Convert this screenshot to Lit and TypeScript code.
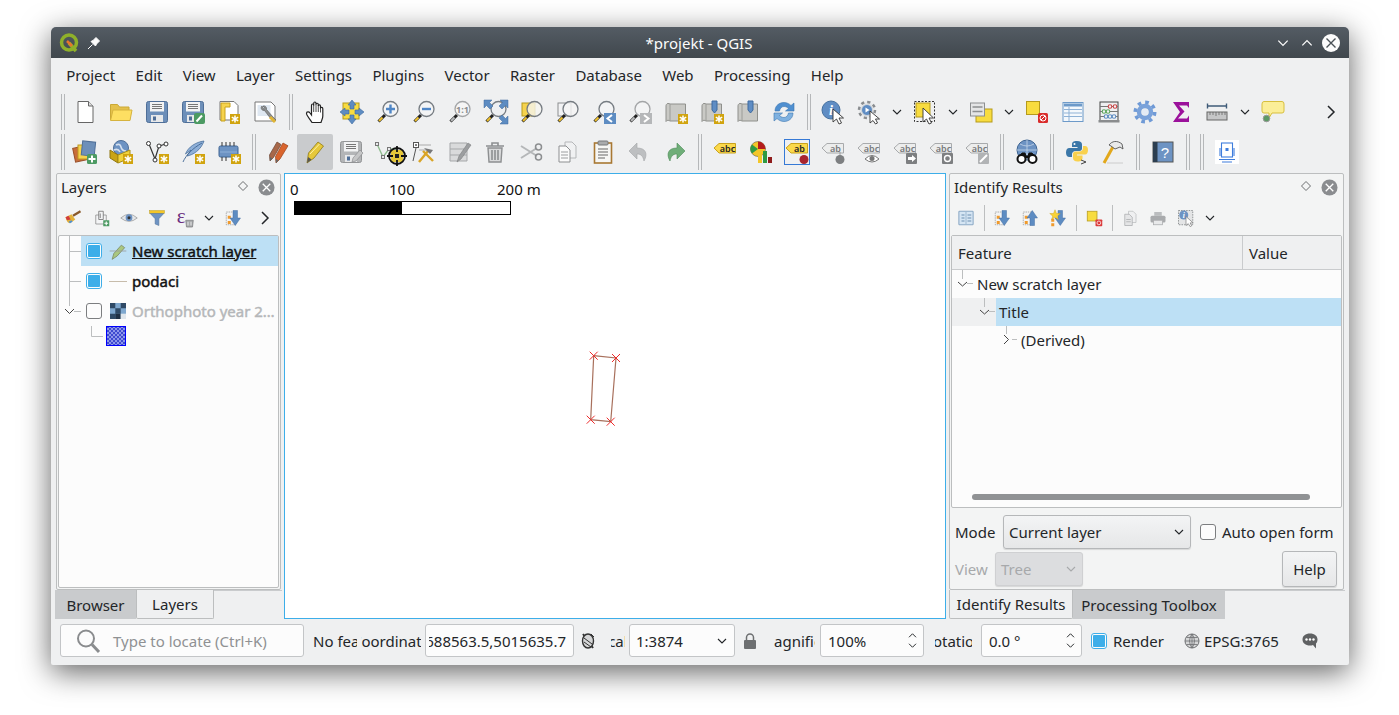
import { LitElement, css, html, svg } from 'lit'
import { customElement } from 'lit/decorators.js'

// shared little pieces for the icons
const star = (x = 14, y = 14) => svg`
  <rect x=${x} y=${y} width="10" height="10" fill="#d1a40f"/>
  <path d="M${x + 5} ${y + 1.5}v7M${x + 1.8} ${y + 3.2}l6.4 3.6M${x + 8.2} ${y + 3.2}l-6.4 3.6" stroke="#fff" stroke-width="1.5"/>`

const mag = (inner: unknown = null, fill = '#f3f4f5', handle = '#efc02c', ring = '#767c82') => svg`
  <line x1="9" y1="15" x2="2.5" y2="21.5" stroke="#222" stroke-width="3"/>
  <line x1="6.5" y1="17.5" x2="3" y2="21" stroke=${handle} stroke-width="2"/>
  <circle cx="14.5" cy="9" r="7.5" fill=${fill} stroke=${ring} stroke-width="1.3"/>
  ${inner}`

const floppy = (c = '#6d8fb9', e = '#4f6f98') => svg`
  <path d="M1.5 3.5a2 2 0 0 1 2-2h17a2 2 0 0 1 2 2v17a2 2 0 0 1-2 2h-17a2 2 0 0 1-2-2z" fill=${c} stroke=${e}/>
  <rect x="5" y="2" width="14" height="9.5" fill="#f2f3f4"/>
  <path d="M7 4.5h10M7 6.5h10M7 8.5h10" stroke="#777" stroke-width="1"/>
  <rect x="6" y="15" width="12" height="7" fill="#e8e9ea"/>
  <rect x="8" y="16.5" width="3" height="4" fill="#4f6f98"/>`

const scroll = (c = '#c9c9c5') => svg`
  <path d="M4 3.5C2.5 3.5 2 5 2 6V21.5C3 20 4.5 20 6 21H21.5V4H6C5.5 3.5 5 3.5 4 3.5Z" fill=${c} stroke="#8f908c"/>
  <path d="M6 4V21" stroke="#9b9c98"/>`

const bookmark = svg`<path d="M12 1H17V10L14.5 13L12 10Z" fill="#5f8dc4" stroke="#3e6a9f"/>`

const tag = (t: string, fill = '#fbd94b', edge = '#c9a21d', ink = '#222') => svg`
  <path d="M1 8L6 3.5H22.5V13H6Z" fill=${fill} stroke=${edge}/>
  <text x="14.5" y="11.5" text-anchor="middle" font-family="Noto Sans, sans-serif" font-size="9" font-weight="600" fill=${ink}>${t}</text>`

const greyTag = (t: string) => tag(t, '#eceded', '#a8aaac', '#77797b')

const icons: Record<string, unknown> = {
  new: svg`<path d="M5 1.5H15.5L20 6V22.5H5Z" fill="#fff" stroke="#666"/><path d="M15.5 1.5V6H20" fill="#ddd" stroke="#666"/>`,
  open: svg`<path d="M1.5 20V4.5H8.5L10.5 7H20V11H5Z" fill="#e4c14c" stroke="#cba935"/><path d="M1.5 20.5L4 10H23L21 20.5Z" fill="#fddf62" stroke="#d6b33e"/>`,
  save: floppy(),
  saveas: svg`${floppy()}<rect x="13" y="13" width="11" height="11" rx="2" fill="#4c9a63"/><path d="M15.5 21.5L21 15.5" stroke="#fff" stroke-width="2"/>`,
  layout: svg`<path d="M3 1.5H17L21 5.5V20H3Z" fill="#fff" stroke="#777"/><path d="M4 3H13V7H8V21H4Z" fill="#f6d34d" stroke="#c9a21d"/>${star(13, 14)}`,
  props: svg`<path d="M2 2H18L22 6V21H2Z" fill="#fff" stroke="#777"/><rect x="4.5" y="5" width="13" height="11" fill="#dfe8f2"/><path d="M9 6C7 8 9 11 11.5 10.5L18 19L21 22L23 20L20 17L13.5 9.5C14 7 12 5.5 10 6L12 8L11 9.5Z" fill="#8d8f90" stroke="#555" stroke-width=".6"/><path d="M17 17L22 22" stroke="#e0b534" stroke-width="3"/>`,
  hand: svg`<path d="M8 22.5C6 19 2.5 15.5 2.5 13.5C2.5 11.5 5 11.5 6 13L7.5 15V5.5C7.5 3.5 9.7 3.5 9.7 5.5V3.5C9.7 1.5 12 1.5 12 3.5V4.5C12 2.8 14.3 2.8 14.3 4.5V6C14.3 4.5 16.5 4.5 16.5 6.2V8.5C16.5 7 18.8 7 18.8 8.8V16C18.8 19 17.3 20.5 17 22.5Z" fill="#fff" stroke="#222" stroke-width="1.2"/><path d="M9.7 5V12M12 4V12M14.3 5.5V12M16.5 8V12.5" stroke="#222" stroke-width=".8"/>`,
  pansel: svg`<rect x="3" y="3" width="16" height="16" fill="#f8dc3f" stroke="#b59a1d"/><path d="M12 0L16 5H14V9H10V5H8ZM12 24L16 19H14V15H10V19H8ZM0 12L5 8V10H9V14H5V16ZM24 12L19 8V10H15V14H19V16Z" fill="#5d8cc2" stroke="#3e6a9f" stroke-width=".6"/>`,
  zin: mag(svg`<path d="M10 9H19M14.5 4.5V13.5" stroke="#4f86c6" stroke-width="2.4"/>`),
  zout: mag(svg`<path d="M10 9H19" stroke="#4f86c6" stroke-width="2.4"/>`),
  z11: mag(svg`<text x="14.5" y="12.5" text-anchor="middle" font-family="Noto Sans, sans-serif" font-size="9" font-weight="700" fill="#8b8d8f">1:1</text>`, '#f5f5f5', '#b9bbbd', '#a3a5a7'),
  zfull: svg`${mag(null, '#eef0f2')}<path d="M0 0H8L5.5 2.5L9 6L6 9L2.5 5.5L0 8ZM24 0H16L18.5 2.5L15 6L18 9L21.5 5.5L24 8ZM24 24H16L18.5 21.5L15 18L18 15L21.5 18.5L24 16Z" fill="#5d8cc2" stroke="#3e6a9f" stroke-width=".5"/>`,
  zsel: svg`<rect x="2" y="3" width="13" height="13" fill="#f6d34d" stroke="#b59a1d"/>${mag(null, 'rgba(245,245,240,.8)')}`,
  zlayer: svg`<rect x="2" y="3" width="13" height="13" fill="#f2f3f4" stroke="#8c8e90"/>${mag(null, 'rgba(245,245,245,.8)')}`,
  zlast: svg`${mag()}<rect x="12" y="13" width="12" height="11" fill="#5d8cc2"/><path d="M20 15L15.5 18.5L20 22" fill="none" stroke="#fff" stroke-width="2"/>`,
  znext: svg`${mag(null, '#f3f4f5', '#bbbcbd', '#a3a5a7')}<rect x="12" y="13" width="12" height="11" fill="#b5b7b9"/><path d="M16 15L20.5 18.5L16 22" fill="none" stroke="#fff" stroke-width="2"/>`,
  map: svg`${scroll()}${star()}`,
  mapmark: svg`${scroll()}${bookmark}${star()}`,
  mark: svg`${scroll()}${bookmark}`,
  refresh: svg`<path d="M3 11C3 5 8 2.5 12 2.5C15 2.5 17.5 4 19 5.5L22 3V11H13.5L16.5 8.5C15 7 13.5 6.5 12 6.5C9.5 6.5 8 8.5 7.5 11Z" fill="#4f8fd0" stroke="#3b75b0" stroke-width=".6"/><path d="M21 13C21 19 16 21.5 12 21.5C9 21.5 6.5 20 5 18.5L2 21V13H10.5L7.5 15.5C9 17 10.5 17.5 12 17.5C14.5 17.5 16 15.5 16.5 13Z" fill="#7fb1e0" stroke="#3b75b0" stroke-width=".6"/>`,
  identify: svg`<circle cx="10" cy="10" r="9" fill="#5f8dc4" stroke="#44709f"/><text x="10" y="15" text-anchor="middle" font-family="Liberation Serif, serif" font-style="italic" font-weight="700" font-size="14" fill="#fff">i</text><path d="M12 9L12 22L15.5 19L18 24L20.5 23L18 18L22.5 18Z" fill="#fff" stroke="#333" stroke-width=".9"/>`,
  action: svg`<circle cx="10" cy="10" r="8" fill="#e6e8ea" stroke="#8a8d90" stroke-width="2.5" stroke-dasharray="3.2 3.08"/><circle cx="10" cy="10" r="5.5" fill="#5f8dc4" stroke="#d5d7d9"/><path d="M8.5 7.5L12.5 10L8.5 12.5Z" fill="#fff"/><path d="M13 11L13 23L16 20.5L18.5 24L20.5 23L18.5 19L22.5 19Z" fill="#fff" stroke="#333" stroke-width=".9"/>`,
  select: svg`<rect x="1.5" y="1.5" width="20" height="20" fill="none" stroke="#333" stroke-dasharray="2 1.5"/><rect x="3" y="3" width="14" height="14" fill="#f8dc3f" stroke="#b59a1d"/><path d="M10 8L10 22L13.5 19L16 24L18.5 23L16 18L20.5 18Z" fill="#fff" stroke="#333" stroke-width=".9"/>`,
  attr: svg`<rect x="7" y="9" width="16" height="13" fill="#f8dc3f" stroke="#b59a1d"/><rect x="1.5" y="3" width="14" height="13" fill="#e4e5e6" stroke="#8c8e90"/><path d="M3.5 7H13.5M3.5 11.5H13.5" stroke="#8c8e90" stroke-width="1.4"/>`,
  desel: svg`<rect x="1.5" y="1.5" width="13" height="13" fill="#f8dc3f" stroke="#b59a1d"/><rect x="13" y="13" width="10" height="10" rx="1.5" fill="#d92b2b"/><circle cx="18" cy="18" r="3" fill="none" stroke="#fff"/><path d="M16 20L20 16" stroke="#fff"/>`,
  table: svg`<rect x="2" y="2.5" width="20" height="19" fill="#f4f8fc" stroke="#6d9ac9"/><rect x="3" y="3.5" width="18" height="3" fill="#6d9ac9"/><path d="M3 9.5H21M3 13H21M3 16.5H21M8 7V21" stroke="#8fb2d6"/>`,
  abacus: svg`<rect x="3" y="2" width="18" height="19" fill="none" stroke="#444"/><rect x="1.5" y="20" width="21" height="2.5" fill="#8a8c8e"/><path d="M3 6.5H21M3 11.5H21M3 16.5H21" stroke="#777"/><g fill="#f3f4f5" stroke-width="1.1"><circle cx="13" cy="6.5" r="1.8" stroke="#cb4545"/><circle cx="18" cy="6.5" r="1.8" stroke="#cb4545"/><circle cx="7" cy="11.5" r="1.8" stroke="#5da75d"/><circle cx="11" cy="11.5" r="1.8" stroke="#5da75d"/><circle cx="9" cy="16.5" r="1.8" stroke="#5d8cc2"/><circle cx="13" cy="16.5" r="1.8" stroke="#5d8cc2"/><circle cx="17" cy="16.5" r="1.8" stroke="#5d8cc2"/></g>`,
  gear: svg`<circle cx="12" cy="12" r="9.7" fill="none" stroke="#6f9ad6" stroke-width="3.6" stroke-dasharray="3.6 4"/><circle cx="12" cy="12" r="6" fill="none" stroke="#7aa2da" stroke-width="4.4"/><circle cx="12" cy="12" r="3" fill="#e4ebf5"/>`,
  sigma: svg`<path d="M4 2H20V8L18 5.5H10L15.5 11.5L9 18.5H18L20 15.5V22H4L11 12Z" fill="#9b119b"/>`,
  ruler: svg`<rect x="2" y="12" width="20" height="8" fill="#c5c6c7" stroke="#666"/><path d="M5 12v3M8 12v3M11 12v4M14 12v3M17 12v3M20 12v3" stroke="#666" stroke-width=".8"/><path d="M2 6H22M2.5 3.5V8.5M21.5 3.5V8.5" stroke="#3f5b78" stroke-width="1.4"/>`,
  bubble: svg`<path d="M3 1.5H21Q23 1.5 23 4V11Q23 13 21 13H11L8 18V13H3Q1 13 1 11V4Q1 1.5 3 1.5Z" fill="#fbee98" stroke="#d7bf3e"/><circle cx="5.5" cy="18.5" r="3.3" fill="#5c9a64" stroke="#999"/>`,
  addlayer: svg`<rect x="1" y="7" width="13" height="14" fill="#c86d3a" stroke="#99502a" transform="rotate(-12 7 14)"/><rect x="5" y="5" width="13" height="14" fill="#f6d34d" stroke="#bd9a22"/><rect x="9" y="1.5" width="13" height="14" fill="#6d8fb9" stroke="#4f6f98" transform="rotate(6 15 8)"/><rect x="14" y="14" width="10" height="10" rx="1.5" fill="#4c9a63"/><path d="M19 15.5V22.5M15.5 19H22.5" stroke="#fff" stroke-width="2"/>`,
  gpkg: svg`<circle cx="12" cy="8" r="7.5" fill="#6d93c3" stroke="#4f6f98"/><path d="M7 5Q11 3 12 7T17 11M5 10Q9 8 11 12" fill="none" stroke="#d5e0ee" stroke-width="1.6"/><path d="M1 10L9 15V23L1 18Z" fill="#c9a415" stroke="#8f7610"/><path d="M9 15L21 10V18L9 23Z" fill="#f1d23c" stroke="#a88d18"/>${star()}`,
  vstar: svg`<path d="M4 4L10 19L14 6L21 4" fill="none" stroke="#333" stroke-width="1.2"/><g fill="#fff" stroke="#333"><circle cx="3.5" cy="3.5" r="2"/><circle cx="10" cy="20" r="2"/><circle cx="14" cy="6" r="2"/><circle cx="21" cy="4" r="2"/></g>${star()}`,
  feather: svg`<path d="M23 1C15 2 7 7 4.5 14C6 13 8 11 10 10C8 12.500 6 15 6 16C12 15 20 10 23 1Z" fill="#8fb0d8" stroke="#3f6593" stroke-width=".7"/><path d="M2 22C5 15 12 8 21 3" fill="none" stroke="#3f6593" stroke-width=".9"/>${star()}`,
  chip: svg`<rect x="2" y="6" width="19" height="11" rx="1.500" fill="#6d93c3" stroke="#3f6593"/><path d="M5 2V6M9 2V6M13 2V6M17 2V6M5 17V21M9 17V21" stroke="#333"/><path d="M3 12H20" stroke="#8fb0d8"/>${star()}`,
  pencils: svg`<path d="M3 21L2.500 15L10 2L14 4.500L6.500 17.500Z" fill="#a8684a" stroke="#6b4430" stroke-width=".7"/><path d="M9 23L8.500 16.500L16 3L21 5.800L13 19Z" fill="#d9642d" stroke="#984119" stroke-width=".7"/><path d="M3 21L2.700 17L5.500 18.500ZM9 23L8.700 19L11.500 20.500Z" fill="#666"/>`,
  pencil: svg`<path d="M4 23L5.5 13L15 2L20.5 6L11 18Z" fill="#e6c83a" stroke="#8f7b17" stroke-width=".8"/><path d="M4 23L5.2 17L8.5 19.5Z" fill="#555"/><path d="M7 14L16.5 4" stroke="#fff3a8"/>`,
  saveedit: svg`${floppy('#b3b5b7', '#939597')}<path d="M13 22L14 18L21 10L24 13L17 21Z" fill="#c5c6c7" stroke="#8c8e90" stroke-width=".7"/>`,
  vertex: svg`<path d="M2 4L8 17L14 9L21 9" fill="none" stroke="#8ebc8e" stroke-width="1.4"/><g fill="#e9eaeb" stroke="#777"><rect x=".5" y="2.5" width="3" height="3"/><rect x="6.5" y="15.5" width="3" height="3"/><rect x="12.5" y="7.5" width="3" height="3"/></g><rect x="16" y="10" width="12" height="12" fill="#e6c83a"/><circle cx="22" cy="16" r="8" fill="none" stroke="#111" stroke-width="1.8"/><path d="M22 6V12M22 20V26M12 16H18M26 16H32" stroke="#111" stroke-width="1.8"/><rect x="20" y="14" width="4" height="4" fill="#222"/>`,
  digi: svg`<path d="M5 8L2 21" stroke="#555"/><rect x="2.5" y="2.5" width="5" height="5" fill="#fff" stroke="#555"/><circle cx="5" cy="5" r="1" fill="#555"/><path d="M8 5H20M8 10H18" stroke="#aaa"/><path d="M8 22L17 11" stroke="#d9a427" stroke-width="2.4"/><path d="M12 11L22 21" stroke="#d9a427" stroke-width="2.4"/><path d="M13 8L19 14L22 10Z" fill="#777"/>`,
  editlist: svg`<path d="M3 3H20V21H3ZM3 9H20M3 15H20" fill="#d9dadb" stroke="#a5a7a9"/><path d="M10 22L12 16L21 3L24 5L14 19Z" fill="#9c9ea0" stroke="#7d7f81" stroke-width=".6"/>`,
  trash: svg`<path d="M3 6H21M9 6V3H15V6" fill="none" stroke="#8d8f91" stroke-width="1.6"/><path d="M5 8H19L18 22H6Z" fill="#d9dadb" stroke="#8d8f91" stroke-width="1.4"/><path d="M9 10V20M12 10V20M15 10V20" stroke="#8d8f91" stroke-width="1.6"/>`,
  scissors: svg`<path d="M2 6L18 16M2 18L18 8" stroke="#b5b7b9" stroke-width="2"/><circle cx="19.5" cy="7" r="3" fill="none" stroke="#8d8f91" stroke-width="1.5"/><circle cx="19.5" cy="17" r="3" fill="none" stroke="#8d8f91" stroke-width="1.5"/>`,
  copy: svg`<path d="M10 2H17L21 6V18H10Z" fill="#f0f1f2" stroke="#b5b7b9"/><path d="M4 6H11L15 10V22H4Z" fill="#fbfbfb" stroke="#8d8f91"/><path d="M6 12H13M6 15H13M6 18H13" stroke="#9b9d9f"/>`,
  paste: svg`<rect x="3.5" y="3" width="17" height="20" fill="#f6f6f4" stroke="#a87833" stroke-width="1.6"/><rect x="7" y="1" width="10" height="4" rx="1" fill="#a9abad" stroke="#77797b"/><path d="M7 9H17M7 12H17M7 15H17M7 18H14" stroke="#666"/>`,
  undo: svg`<path d="M10 3L2 11L10 19V14C14 14 16 16 17 21C21 14 19 8 10 8Z" fill="#bdbfc1" stroke="#a2a4a6" stroke-width=".6"/>`,
  redo: svg`<path d="M14 3L22 11L14 19V14C10 14 8 16 7 21C3 14 5 8 14 8Z" fill="#6fae78" stroke="#4e8a58" stroke-width=".6"/>`,
  labelabc: tag('abc'),
  pie: svg`<circle cx="9" cy="9" r="7.5" fill="#f3c628" stroke="#444" stroke-width=".5"/><path d="M9 9V1.5A7.5 7.5 0 0 1 16.5 9Z" fill="#b41c1c"/><path d="M9 9L3 13.5A7.5 7.5 0 0 1 3 4.5Z" fill="#2f9a44"/><rect x="9" y="15" width="4" height="8" fill="#f3c628"/><rect x="14" y="11" width="4" height="12" fill="#2f9a44"/><rect x="19" y="17" width="4" height="6" fill="#8f1c1c"/>`,
  abpin: svg`${tag('ab')}<circle cx="19" cy="19.500" r="4.5" fill="#a8252f"/>`,
  abgrey: svg`${greyTag('ab')}<path d="M19 12V16" stroke="#9c9ea0"/><circle cx="19" cy="19.500" r="4.5" fill="#7d7f81"/>`,
  abceye: svg`${greyTag('abc')}<path d="M8 19Q15 12 22 19Q15 25 8 19Z" fill="#fff" stroke="#777"/><circle cx="15" cy="18.5" r="2.5" fill="#777"/>`,
  abcmove: svg`${greyTag('abc')}<rect x="13" y="13" width="11" height="11" rx="1" fill="#7d7f81"/><path d="M15 17H19V15L23 18.5L19 22V20H15Z" fill="#fff"/>`,
  abcrot: svg`${greyTag('abc')}<rect x="13" y="13" width="11" height="11" rx="1" fill="#7d7f81"/><circle cx="18.5" cy="18.5" r="3" fill="none" stroke="#fff" stroke-width="1.4"/>`,
  abcedit: svg`${greyTag('abc')}<rect x="13" y="13" width="11" height="11" rx="1" fill="#b1b3b5"/><path d="M15 22L22 15" stroke="#fff" stroke-width="2"/>`,
  globebin: svg`<circle cx="12" cy="10" r="10" fill="#6d93c3" stroke="#3f6593"/><path d="M2 10H22M12 0V20M5 4Q12 8 19 4M5 16Q12 12 19 16" fill="none" stroke="#c5d5e8" stroke-width=".8"/><path d="M3 18L7 13H10L11 16H13L14 13H17L21 18" fill="#111" stroke="#111"/><circle cx="6.5" cy="19" r="4" fill="#fff" stroke="#111" stroke-width="2"/><circle cx="17.5" cy="19" r="4" fill="#fff" stroke="#111" stroke-width="2"/>`,
  python: svg`<path d="M12 1C8 1 7 2.5 7 4.5V7H12.5V8H4.5C2 8 1 10 1 12.5C1 15 2 17 4.5 17H7V14C7 12.5 8.5 11 10.5 11H14.5C16 11 17 10 17 8.5V4.5C17 2.5 15.5 1 12 1Z" fill="#3b77a8"/><circle cx="9.5" cy="4" r="1" fill="#fff"/><path d="M12.5 21.5C16.5 21.5 17.5 20 17.5 18V15.5H12V14.5H20C22 14.5 23 12.5 23 10C23 7.5 22 6 20 6H18V8.5C18 10 16.5 11.5 14.5 11.5H10.5C9 11.5 8 12.5 8 14V18C8 20 9.5 21.5 12.5 21.5Z" fill="#f9d14d"/><path d="M16 20L21 22L16 24" fill="none" stroke="#444"/>`,
  hammer: svg`<path d="M3 23L13 5" stroke="#e2a81c" stroke-width="3"/><path d="M8 5C11 1 16 0 21 4L22 9L19 7L14 9L10 6Z" fill="#e9eaeb" stroke="#555" stroke-width=".9"/><path d="M6 23H22" stroke="#ccc"/>`,
  help: svg`<rect x="2" y="2" width="20" height="20" fill="#6d93c3" stroke="#555"/><rect x="2" y="2" width="4.5" height="20" fill="#2c3e50"/><text x="14" y="18" text-anchor="middle" font-family="Liberation Sans, sans-serif" font-size="15" fill="#fff">?</text>`,
  plugin: svg`<rect width="24" height="24" fill="#fff"/><rect x="6.500" y="3" width="11" height="14" fill="none" stroke="#3f7ddc" stroke-width="1.100"/><path d="M5 8V16M19 8V16M4 19.500H20M7 22H17" stroke="#3f7ddc" stroke-width="1.100" fill="none"/><rect x="10.500" y="8" width="3" height="3" fill="#3f7ddc"/>`,
  brush: svg`<path d="M2 11L10 7L15 14L8 19C5 19 3 15 2 11Z" fill="#e3b23a"/><path d="M2 11L6 9L9 14L4 15Z" fill="#d23c3c"/><path d="M6 17L10 15L11.5 17L8 19Z" fill="#4f8fd0"/><path d="M12 9L22 3" stroke="#8a5a2b" stroke-width="3"/>`,
  addgroup: svg`<path d="M5 8H19V20H5Z" fill="#f3f4f5" stroke="#888"/><path d="M9 3H15V14H9Z" fill="#f3f4f5" stroke="#666"/><path d="M11 6V12" stroke="#666"/><rect x="15" y="15" width="8" height="8" fill="#4c9a63"/><path d="M19 16.5V21.5M16.5 19H21.5" stroke="#fff" stroke-width="1.5"/>`,
  eye: svg`<path d="M1 12Q12 2 23 12Q12 21 1 12Z" fill="#e4e6e8" stroke="#999"/><circle cx="12" cy="11.5" r="4.5" fill="#6d93c3"/><circle cx="12" cy="11.5" r="2" fill="#333"/>`,
  filter: svg`<rect x="2" y="2" width="20" height="4" fill="#f3c628" stroke="#b59a1d" stroke-width=".6"/><path d="M3 6H21L14.5 13V22L9.5 20V13Z" fill="#6d93c3" stroke="#4f6f98" stroke-width=".7"/>`,
  expr: svg`<text x="7" y="18" text-anchor="middle" font-family="Liberation Serif, serif" font-size="28" fill="#6a2d7f">ε</text><path d="M13 15H23L22 24H14Z" fill="#a6a8aa" stroke="#7d7f81"/><path d="M16 17V22M20 17V22" stroke="#fff"/>`,
  expand: svg`<rect x="3" y="4" width="13" height="17" fill="none" stroke="#999" stroke-dasharray="2 1"/><path d="M5 9h4v4H5zM5 16h4v4H5z" fill="#f09a2c"/><path d="M12 2H18V12H22L15 22L8 12H12Z" fill="#5d8cc2" stroke="#3e6a9f" stroke-width=".6"/>`,
  collapse: svg`<rect x="3" y="4" width="13" height="17" fill="none" stroke="#999" stroke-dasharray="2 1"/><path d="M5 9h4v4H5zM5 16h4v4H5z" fill="#f09a2c"/><path d="M12 22H18V12H22L15 2L8 12H12Z" fill="#5d8cc2" stroke="#3e6a9f" stroke-width=".6"/>`,
  expandnew: svg`<path d="M3 13h4v4H3zM3 19h4v4H3z" fill="#f09a2c"/><path d="M12 2H18V12H22L15 22L8 12H12Z" fill="#5d8cc2" stroke="#3e6a9f" stroke-width=".6"/><path d="M8 1L10 6L15 6L11 9.5L12.5 14L8 11L3.5 14L5 9.5L1 6L6 6Z" fill="#f8d336" stroke="#c9a21d" stroke-width=".6"/>`,
  formview: svg`<rect x="2.5" y="3" width="19" height="18" rx="1" fill="#d5e5f3" stroke="#8ba9c5" stroke-width="1.4"/><path d="M12 4V20" stroke="#8ba9c5"/><path d="M6 8H10M6 12H10M6 16H10M14 8H19M14 12H19M14 16H19" stroke="#6d8fb1" stroke-width="1.6"/>`,
  deselsm: svg`<rect x="3" y="3" width="13" height="13" fill="#f8dc3f" stroke="#b59a1d"/><rect x="14" y="14" width="9" height="9" rx="1" fill="#db3a3a"/><circle cx="18.5" cy="18.5" r="2.5" fill="none" stroke="#fff"/>`,
  copygrey: svg`<path d="M10 3H16L20 7V18H10Z" fill="#eff0f1" stroke="#bbbdbf"/><path d="M5 7H11L15 11V22H5Z" fill="#e4e5e6" stroke="#a9abad"/><path d="M7 14H13M7 17H13" stroke="#a9abad"/>`,
  print: svg`<rect x="7" y="4" width="10" height="5" fill="#bbbdbf"/><rect x="2" y="9" width="20" height="9" rx="2" fill="#a9abad"/><rect x="6" y="15" width="12" height="6" fill="#e8e9ea" stroke="#a9abad"/>`,
  idsel: svg`<rect x="2" y="2" width="19" height="19" fill="#e4e5e6" stroke="#77797b" stroke-dasharray="2 1.4"/><circle cx="9" cy="8" r="6" fill="#6d93c3"/><text x="9" y="12" text-anchor="middle" font-family="Liberation Serif, serif" font-style="italic" font-weight="700" font-size="10" fill="#fff">i</text><path d="M12 10L12 22L15 19.5L17.5 23.5L19.5 22.5L17.5 18.5L21.5 18.5Z" fill="#fff" stroke="#777" stroke-width=".9"/>`,
}

const ic = (name: string) => html`<svg class="ic" viewBox="0 0 24 24">${icons[name]}</svg>`

const chevron = (up = false) => html`<svg class="chev" viewBox="0 0 12 8"><path d=${up ? 'M2 6L6 2L10 6' : 'M2 2L6 6L10 2'} fill="none" stroke="currentColor" stroke-width="1.1"/></svg>`

const rightChevron = html`<svg class="rchev" viewBox="0 0 10 16"><path d="M2 2L8 8L2 14" fill="none" stroke="#232629" stroke-width="1.5"/></svg>`

const closeDot = html`<svg class="dot" viewBox="0 0 18 18"><circle cx="9" cy="9" r="8.5" fill="#8a8c8f"/><path d="M5 5L13 13M13 5L5 13" stroke="#fff" stroke-width="1.4"/></svg>`

const diamond = html`<svg class="diamond" viewBox="0 0 12 12"><path d="M6 1.5L10.5 6L6 10.5L1.5 6Z" fill="none" stroke="#6c6e70"/></svg>`

const MENU = ['Project', 'Edit', 'View', 'Layer', 'Settings', 'Plugins', 'Vector', 'Raster', 'Database', 'Web', 'Processing', 'Help']

const ROW1 = ['new', 'open', 'save', 'saveas', 'layout', 'props', '|', 'hand', 'pansel', 'zin', 'zout', 'z11', 'zfull', 'zsel', 'zlayer', 'zlast', 'znext', 'map', 'mapmark', 'mark', 'refresh', '!', 'identify', 'action', 'v', 'select', 'v', 'attr', 'v', 'desel', 'table', 'abacus', 'gear', 'sigma', 'ruler', 'v', 'bubble']
const ROW2 = ['addlayer', 'gpkg', 'vstar', 'feather', 'chip', '|', 'pencils', '*pencil', 'saveedit', 'vertex', 'digi', 'editlist', 'trash', 'scissors', 'copy', 'paste', 'undo', 'redo', '|', 'labelabc', 'pie', '#abpin', 'abgrey', 'abceye', 'abcmove', 'abcrot', 'abcedit', '|', 'globebin', '|', 'python', 'hammer', '|', 'help', '|', '|', 'plugin']

const toolItem = (n: string) => {
  if (n === '|') return html`<span class="sep"><i></i><i></i></span>`
  if (n === '!') return html`<span class="sep narrow"><i></i><i></i></span>`
  if (n === 'v') return html`<span class="drop">${chevron()}</span>`
  if (n[0] === '*') return html`<span class="tool on">${ic(n.slice(1))}</span>`
  if (n[0] === '#') return html`<span class="tool framed">${ic(n.slice(1))}</span>`
  return html`<span class="tool">${ic(n)}</span>`
}

const dockItem = (n: string) => {
  if (n === '|') return html`<span class="dsep"></span>`
  if (n === 'v') return html`<span class="drop">${chevron()}</span>`
  return html`<span class="dtool">${ic(n)}</span>`
}

@customElement('app-root')
export class AppRoot extends LitElement {
  static styles = css`
    :host {
      display: block;
      height: 715px;
      box-sizing: border-box;
      padding: 27px 50px 50px 51px;
      background: #fff;
      font-family: "Noto Sans", sans-serif;
      font-size: 15px;
      color: #232629;
      overflow: hidden;
    }
    * { box-sizing: border-box; }
    .win {
      height: 638px;
      display: flex;
      flex-direction: column;
      background: #eff0f1;
      border-radius: 5px 5px 2px 2px;
      box-shadow: 0 7px 30px rgba(0, 0, 0, .62);
    }
    .title {
      height: 31px;
      flex: none;
      display: flex;
      align-items: center;
      padding: 0 9px 0 7px;
      background: linear-gradient(#545c64, #40474d);
      border-radius: 5px 5px 0 0;
      color: #fcfcfc;
    }
    .title .side { flex: 1; display: flex; align-items: center; }
    .title .side.end { justify-content: flex-end; }
    .title .logo { width: 20px; height: 20px; margin-left: 1px; }
    .title .pin { width: 14px; height: 14px; margin-left: 8px; }
    .title .chev { width: 14px; height: 10px; margin-left: 10px; color: #fcfcfc; }
    .title .wclose { width: 18px; height: 18px; margin-left: 8px; }

    .menu { height: 34px; flex: none; display: flex; align-items: center; padding: 0 5px; }
    .menu span { padding: 0 10.2px; }

    .bar { height: 40px; flex: none; display: flex; align-items: center; padding-left: 10px; }
    .grip, .sep { display: flex; justify-content: center; gap: 2px; height: 36px; flex: none; }
    .grip { width: 6px; justify-content: flex-start; }
    .sep { width: 15px; }
    .sep.narrow { width: 13px; }
    .grip i, .sep i { width: 1px; background: #b5b7b9; }
    .bar.two .sep { width: 14px; }
    .tool { width: 36px; height: 36px; display: flex; align-items: center; justify-content: center; flex: none; }
    .tool.on { background: #c9cbcd; border-radius: 2px; }
    .tool.framed .ic { outline: 1px solid #3579d6; }
    .ic { width: 24px; height: 24px; overflow: visible; display: block; }
    .drop { width: 20px; display: flex; justify-content: center; flex: none; color: #232629; }
    .chev { width: 12px; height: 8px; display: block; }
    .rchev { width: 10px; height: 16px; display: block; }
    .more { margin-left: auto; margin-right: 13px; }

    .main { flex: 1; min-height: 0; display: flex; gap: 2px; padding: 1px 4px 0 4px; }
    .col { display: flex; flex-direction: column; flex: none; }
    .col.left { width: 227px; }
    .col.right { width: 397px; padding-left: 1px; }
    .panel {
      flex: 1;
      min-height: 0;
      display: flex;
      flex-direction: column;
      border: 1px solid #bcbebf;
      border-radius: 2px;
      margin-left: 1px;
      background: #f3f4f4;
    }
    .col.left .panel { margin-right: 1px; }
    .col.right .panel { margin: 0 1px 0 0; }
    .dhead { height: 29px; flex: none; display: flex; align-items: center; padding: 0 4px 3px 4px; }
    .dhead .grow { flex: 1; }
    .diamond { width: 12px; height: 12px; margin-right: 9px; margin-top: -2px; }
    .dot { width: 17px; height: 17px; margin-right: 1px; }
    .dbar { height: 32px; flex: none; display: flex; align-items: center; padding: 0 3px 2px 2px; }
    .dtool { width: 28px; display: flex; justify-content: center; flex: none; }
    .dtool .ic { width: 18px; height: 18px; }
    .dsep { width: 8px; height: 26px; flex: none; display: flex; justify-content: center; }
    .dsep::after { content: ""; width: 1px; height: 100%; background: #bcbebf; }
    .dbar .more { margin-right: 7px; }

    .treebox {
      flex: 1;
      min-height: 0;
      display: flex;
      flex-direction: column;
      margin: 0 1px 1px 1px;
      background: #fcfcfc;
      border: 1px solid #bcbebf;
      border-radius: 2px;
    }
    .lrow { height: 30px; flex: none; display: flex; align-items: center; }
    .lrow .body { flex: 1; min-width: 0; height: 100%; display: flex; align-items: center; padding-left: 5px; }
    .lrow .body.sel { background: #bde0f5; }
    .branch { display: block; flex: none; }
    .chk { width: 16px; height: 16px; flex: none; border: 1px solid #3daee9; border-radius: 3px; background: #fcfcfc; display: flex; align-items: center; justify-content: center; }
    .chk::after { content: ""; width: 12px; height: 12px; background: #3daee9; border-radius: 1px; }
    .chk.off { border-color: #7c7e80; }
    .chk.off::after { display: none; }
    .licon { width: 20px; height: 20px; margin: 0 4px 0 6px; flex: none; }
    .licon.small { padding: 2px; }
    .lname { white-space: nowrap; color: #111; -webkit-text-stroke: .45px currentColor; }
    .lname.u { text-decoration: underline; }
    .lname.dim { color: #b5b7b9; overflow: hidden; text-overflow: ellipsis; }
    .legend { height: 22px; display: flex; flex: none; }

    .tabs { height: 30px; flex: none; display: flex; }
    .tab { display: flex; align-items: center; justify-content: center; height: 29px; }
    .tab.idle { background: #c9cbcd; }
    .tab.cur { background: #eff0f1; border: 1px solid #bcbebf; border-top: none; border-radius: 0 0 2px 2px; }
    .tabs .rest { flex: 1; border-top: 1px solid #c9cbcd; height: 1px; }
    .w-browser { width: 81px; }
    .w-layers { width: 78px; }
    .w-ident { width: 124px; }
    .w-proc { width: 152px; }

    .canvas { flex: 1; min-width: 0; margin-bottom: 1px; background: #fff; border: 1px solid #3daee9; position: relative; }
    .canvas svg { position: absolute; left: -1px; top: -1px; width: 662px; height: 445px; }
    .canvas text { font-family: "Noto Sans", sans-serif; font-size: 15px; fill: #111; }

    .thead { height: 34px; flex: none; display: flex; background: #eff0f1; border-bottom: 1px solid #c9cbcd; }
    .thead span { display: flex; align-items: center; padding-left: 6px; }
    .thead .c1 { width: 291px; border-right: 1px solid #c9cbcd; }
    .rrow { height: 28px; flex: none; display: flex; align-items: center; white-space: nowrap; }
    .rrow .t1 { margin-left: 1px; }
    .rrow .fill { flex: 1; height: 100%; background: #bde0f5; display: flex; align-items: center; padding-left: 3px; }
    .rrow.mid { background: #eff0f1; }
    .rrow .t3 { margin-left: 3px; }
    .spacer { flex: 1; }
    .hbar { height: 6px; flex: none; margin: 0 31px 7px 20px; background: #909294; border-radius: 3px; }

    .form { flex: none; height: 80px; display: flex; flex-direction: column; padding: 6px 5px 0 5px; }
    .frow { display: flex; align-items: center; }
    .frow.a { height: 34px; }
    .frow.b { height: 36px; margin-top: 2px; }
    .mode { width: 48px; }
    .view { width: 40px; color: #a7a9ab; }
    .combo {
      display: flex;
      align-items: center;
      justify-content: space-between;
      height: 34px;
      padding: 0 5px;
      border: 1px solid #b5b7b9;
      border-radius: 3px;
      background: linear-gradient(#f3f4f5, #e6e7e8);
      box-shadow: 0 1px 1px rgba(0, 0, 0, .12);
    }
    .c-mode { width: 188px; }
    .c-view { width: 88px; color: #a7a9ab; background: #dcdddf; border-color: #cfd0d2; }
    .chk.box { margin-left: 9px; margin-right: 6px; }
    .btn { margin-left: auto; width: 55px; height: 36px; margin-right: 1px; }
    .btn.combo { justify-content: center; }

    .status { height: 45px; flex: none; display: flex; align-items: center; padding: 0 0 4px 9px; }
    .input { height: 33px; flex: none; display: flex; align-items: center; background: #fcfcfc; border: 1px solid #c3c5c7; border-radius: 3px; white-space: nowrap; overflow: hidden; }
    .locator { width: 244px; padding-left: 14px; color: #8f9193; }
    .locator svg { width: 26px; height: 26px; margin-right: 12px; flex: none; }
    .clip { display: flex; justify-content: center; overflow: hidden; white-space: nowrap; flex: none; }
    .clip.start { justify-content: flex-start; }
    .l-msg { width: 44px; margin-left: 9px; }
    .l-coord { width: 60px; margin-left: 4px; margin-right: 4px; }
    .coord { width: 149px; padding: 0 7px 0 3px; }
    .coord .clip { width: 100%; justify-content: flex-end; }
    .mouse { width: 16px; height: 18px; margin: 0 15px 0 6px; flex: none; }
    .l-scale { width: 14px; margin-right: 4px; }
    .scale { width: 106px; justify-content: space-between; padding: 0 6px; }
    .lock { width: 14px; height: 16px; margin: 0 17px 0 8px; flex: none; }
    .l-mag { width: 41px; margin-right: 5px; }
    .spin { justify-content: space-between; padding: 0 5px 0 7px; }
    .s-mag { width: 104px; }
    .l-rot { width: 37px; margin: 0 9px 0 11px; }
    .s-rot { width: 101px; }
    .arrows { display: flex; flex-direction: column; gap: 3px; }
    .arrows .chev { width: 11px; height: 7px; }
    .render { margin-left: 9px; margin-right: 6px; }
    .globe { width: 16px; height: 16px; margin: 0 4px 0 20px; flex: none; }
    .talk { width: 16px; height: 16px; margin-left: 23px; flex: none; }
  `

  render() {
    return html`
      <div class="win">
        <div class="title">
          <div class="side">
            <svg class="logo" viewBox="0 0 20 20"><circle cx="10" cy="9.5" r="7.5" fill="none" stroke="#8fb02a" stroke-width="3.5"/><path d="M10 10L17 18" stroke="#8fb02a" stroke-width="3.5"/><path d="M8 8L13 13" stroke="#e8762c" stroke-width="2.5"/></svg>
            <svg class="pin" viewBox="0 0 14 14"><path d="M1 13L5.5 8.5M4 5.5L8.5 10L9.5 8L12.5 5L9 1.5L6 4.5Z" fill="#fcfcfc" stroke="#fcfcfc"/></svg>
          </div>
          <span>*projekt - QGIS</span>
          <div class="side end">
            ${chevron()}${chevron(true)}
            <svg class="wclose" viewBox="0 0 18 18"><circle cx="9" cy="9" r="9" fill="#fcfcfc"/><path d="M4.5 4.5L13.5 13.5M13.5 4.5L4.5 13.5" stroke="#4a5157" stroke-width="1.4"/></svg>
          </div>
        </div>
        <div class="menu">${MENU.map(m => html`<span>${m}</span>`)}</div>
        <div class="bar">
          <span class="grip"><i></i><i></i></span>
          ${ROW1.map(toolItem)}
          <span class="more">${rightChevron}</span>
        </div>
        <div class="bar two">
          <span class="grip"><i></i><i></i></span>
          ${ROW2.map(toolItem)}
        </div>
        <div class="main">
          <div class="col left">
            <div class="panel">
              <div class="dhead"><span>Layers</span><span class="grow"></span>${diamond}${closeDot}</div>
              <div class="dbar">
                ${['brush', 'addgroup', 'eye', 'filter', 'expr', 'v', 'expand'].map(dockItem)}
                <span class="more">${rightChevron}</span>
              </div>
              <div class="treebox">${this.layerRows()}</div>
            </div>
            <div class="tabs">
              <span class="tab idle w-browser">Browser</span>
              <span class="tab cur w-layers">Layers</span>
              <span class="rest"></span>
            </div>
          </div>
          <div class="canvas">${this.mapCanvas()}</div>
          <div class="col right">
            <div class="panel">
              <div class="dhead"><span>Identify Results</span><span class="grow"></span>${diamond}${closeDot}</div>
              <div class="dbar">
                ${['formview', '|', 'expand', 'collapse', 'expandnew', '|', 'deselsm', '|', 'copygrey', 'print', 'idsel', 'v'].map(dockItem)}
              </div>
              <div class="treebox">${this.resultRows()}</div>
              <div class="form">
                <div class="frow a">
                  <span class="mode">Mode</span>
                  <span class="combo c-mode"><span>Current layer</span>${chevron()}</span>
                  <span class="chk off box"></span>
                  <span>Auto open form</span>
                </div>
                <div class="frow b">
                  <span class="view">View</span>
                  <span class="combo c-view"><span>Tree</span>${chevron()}</span>
                  <span class="combo btn">Help</span>
                </div>
              </div>
            </div>
            <div class="tabs">
              <span class="tab cur w-ident">Identify Results</span>
              <span class="tab idle w-proc">Processing Toolbox</span>
              <span class="rest"></span>
            </div>
          </div>
        </div>
        ${this.statusBar()}
      </div>
    `
  }

  layerRows() {
    return html`
      <div class="lrow">
        <svg class="branch" width="22" height="30"><path d="M10.5 0V30M10.5 15.5H22" stroke="#bcbebf" fill="none"/></svg>
        <div class="body sel">
          <span class="chk"></span>
          <svg class="licon" viewBox="0 0 24 24"><path d="M5 22L7 15L16 5L20 8L11 18Z" fill="#a9c77f" stroke="#7d8c66"/><path d="M2 12H22" stroke="#9a9c9e"/></svg>
          <span class="lname u">New scratch layer</span>
        </div>
      </div>
      <div class="lrow">
        <svg class="branch" width="22" height="30"><path d="M10.5 0V30M10.5 15.5H22" stroke="#bcbebf" fill="none"/></svg>
        <div class="body">
          <span class="chk"></span>
          <svg class="licon" viewBox="0 0 20 20"><path d="M1 10.5H19" stroke="#c7bcab"/></svg>
          <span class="lname">podaci</span>
        </div>
      </div>
      <div class="lrow">
        <svg class="branch" width="22" height="30"><path d="M10.5 0V10M15 15.5H22" stroke="#bcbebf" fill="none"/><path d="M6 13L10.5 17.5L15 13" stroke="#444" fill="none"/></svg>
        <div class="body">
          <span class="chk off"></span>
          <svg class="licon small" viewBox="0 0 16 16">
            <rect width="16" height="16" fill="#7fa8cf"/>
            <path d="M0 0H5.300V5.300H0ZM10.700 0H16V5.300H10.700ZM5.300 5.300H10.700V10.700H5.300ZM0 10.700H5.300V16H0Z" fill="#2f4a66"/>
            <path d="M5.300 10.700H10.700V16H5.300Z" fill="#1f3044"/>
            <path d="M10.700 10.700H16V16H10.700Z" fill="#dfe6ec"/>
          </svg>
          <span class="lname dim">Orthophoto year 2018</span>
        </div>
      </div>
      <div class="legend">
        <svg class="branch" width="70" height="22" viewBox="0 0 70 22">
          <defs><pattern id="chk" width="4" height="4" patternUnits="userSpaceOnUse"><rect width="4" height="4" fill="#8e97ea"/><rect width="2" height="2" fill="#3f4bcf"/><rect x="2" y="2" width="2" height="2" fill="#3f4bcf"/></pattern></defs>
          <path d="M32.5 0V10.5H44" stroke="#bcbebf" fill="none"/>
          <rect x="47.5" y="0.5" width="19" height="19" fill="url(#chk)" stroke="#0000ff"/>
        </svg>
      </div>
    `
  }

  resultRows() {
    return html`
      <div class="thead"><span class="c1">Feature</span><span>Value</span></div>
      <div class="rrow">
        <svg class="branch" width="24" height="28"><path d="M10.5 0V9M15 13.5H21" stroke="#bcbebf" fill="none"/><path d="M6 12L10.5 16L15 12" stroke="#444" fill="none"/></svg>
        <span class="t1">New scratch layer</span>
      </div>
      <div class="rrow mid">
        <svg class="branch" width="44" height="28"><path d="M32.5 0V9M37 13.5H43" stroke="#bcbebf" fill="none"/><path d="M28 12L32.5 16L37 12" stroke="#444" fill="none"/></svg>
        <span class="fill">Title</span>
      </div>
      <div class="rrow">
        <svg class="branch" width="66" height="28"><path d="M54.5 0V8M60 13.5H65" stroke="#bcbebf" fill="none"/><path d="M52 9L56.5 13.5L52 18" stroke="#444" fill="none"/></svg>
        <span class="t3">(Derived)</span>
      </div>
      <div class="spacer"></div>
      <div class="hbar"></div>
    `
  }

  mapCanvas() {
    const pts = [[593.7, 356.7], [616, 359], [610.7, 422.7], [590.7, 420.7]].map(([x, y]) => [x - 284, y - 174])
    return html`
      <svg viewBox="0 0 662 445">
        <text x="6" y="22">0</text>
        <text x="105" y="22">100</text>
        <text x="213" y="22">200 m</text>
        <rect x="10.5" y="28.5" width="216" height="13" fill="#fff" stroke="#000"/>
        <rect x="10" y="28" width="108" height="14" fill="#000"/>
        <polygon points=${pts.map(p => p.join(',')).join(' ')} fill="none" stroke="#a8705c" stroke-width="1.2"/>
        ${pts.map(([x, y]) => svg`<path d="M${x - 4} ${y - 4}L${x + 4} ${y + 4}M${x + 4} ${y - 4}L${x - 4} ${y + 4}" stroke="#ee2a2a" stroke-width="1"/>`)}
      </svg>
    `
  }

  statusBar() {
    return html`
      <div class="status">
        <div class="input locator">
          <svg viewBox="0 0 26 26"><circle cx="11" cy="10.5" r="8" fill="none" stroke="#8a8c8e" stroke-width="2"/><path d="M17 16.5L24 24" stroke="#8a8c8e" stroke-width="3"/></svg>
          <span>Type to locate (Ctrl+K)</span>
        </div>
        <span class="clip start l-msg">No features</span>
        <span class="clip l-coord">Coordinate</span>
        <div class="input coord"><span class="clip"><span>5688563.5,5015635.7</span></span></div>
        <svg class="mouse" viewBox="0 0 16 18"><path d="M3 2L13 16" stroke="#333" stroke-width="2"/><ellipse cx="8" cy="9" rx="5.5" ry="7" fill="#d5d6d7" stroke="#333" stroke-width="1.4"/><path d="M4 6L12 12M4 10L11 15M11 2L14 5" stroke="#333"/></svg>
        <span class="clip l-scale">Scale</span>
        <div class="input scale"><span>1:3874</span>${chevron()}</div>
        <svg class="lock" viewBox="0 0 14 16"><path d="M3.5 7V4.5a3.5 3.5 0 0 1 7 0V7" fill="none" stroke="#6d6f71" stroke-width="1.5"/><rect x="1" y="7" width="12" height="9" rx="1" fill="#6d6f71"/></svg>
        <span class="clip l-mag">Magnifier</span>
        <div class="input spin s-mag"><span>100%</span><span class="arrows">${chevron(true)}${chevron()}</span></div>
        <span class="clip l-rot">Rotation</span>
        <div class="input spin s-rot"><span>0.0 °</span><span class="arrows">${chevron(true)}${chevron()}</span></div>
        <span class="chk render"></span>
        <span>Render</span>
        <svg class="globe" viewBox="0 0 16 16"><circle cx="8" cy="8" r="7" fill="#d5d6d7" stroke="#6d6f71"/><path d="M1 8H15M8 1V15M2.5 4.5H13.5M2.5 11.5H13.5M8 1Q3 8 8 15Q13 8 8 1" fill="none" stroke="#6d6f71" stroke-width=".8"/></svg>
        <span>EPSG:3765</span>
        <svg class="talk" viewBox="0 0 16 16"><path d="M8 0.5C3.5 0.5 0.5 3 0.5 6.5C0.5 10 3.5 12.5 8 12.5C9 12.5 10 12.5 11 12L14 15.5V10.5C15 9.5 15.5 8 15.5 6.5C15.5 3 12.5 0.5 8 0.5Z" fill="#5f6163"/><g fill="#fff"><circle cx="4.5" cy="6.5" r="1.2"/><circle cx="8" cy="6.5" r="1.2"/><circle cx="11.5" cy="6.5" r="1.2"/></g></svg>
      </div>
    `
  }
}
